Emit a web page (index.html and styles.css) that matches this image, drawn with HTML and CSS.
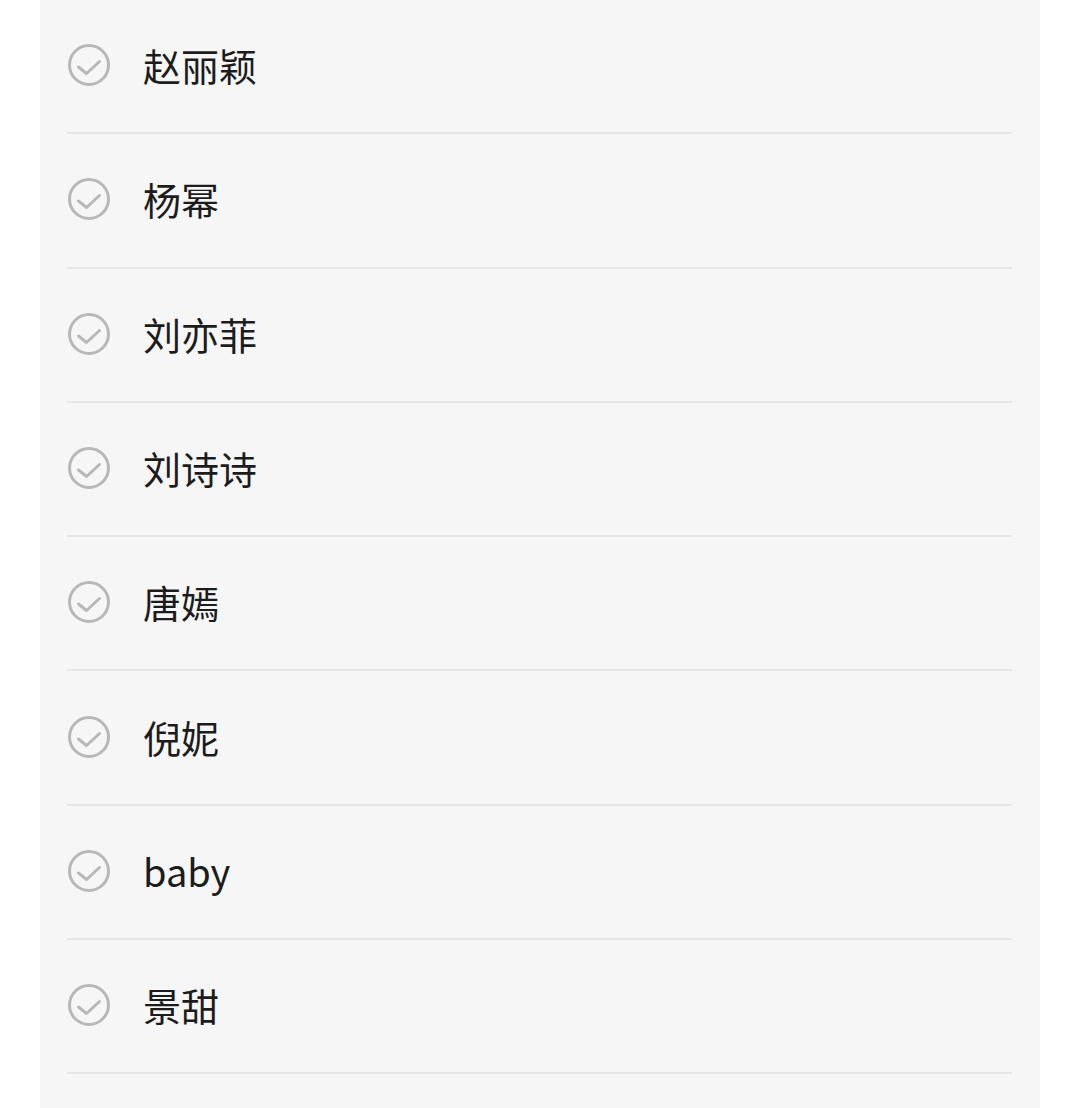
FILE: index.html
```
<!DOCTYPE html>
<html lang="zh">
<head>
    <meta charset="UTF-8">
    <meta name="viewport" content="width=device-width, initial-scale=1.0">
    <title>名单</title>
    <link rel="stylesheet" href="styles.css">
</head>
<body>
    <div class="panel">
        <ul class="list">
            <li class="item"><svg class="check" viewBox="0 0 44 44"><circle cx="22" cy="22" r="19.5" /><path d="M11.5 24 L19.5 30.5 L32.5 18.5" /></svg><span class="name">赵丽颖</span></li>
            <li class="item"><svg class="check" viewBox="0 0 44 44"><circle cx="22" cy="22" r="19.5" /><path d="M11.5 24 L19.5 30.5 L32.5 18.5" /></svg><span class="name">杨幂</span></li>
            <li class="item"><svg class="check" viewBox="0 0 44 44"><circle cx="22" cy="22" r="19.5" /><path d="M11.5 24 L19.5 30.5 L32.5 18.5" /></svg><span class="name">刘亦菲</span></li>
            <li class="item"><svg class="check" viewBox="0 0 44 44"><circle cx="22" cy="22" r="19.5" /><path d="M11.5 24 L19.5 30.5 L32.5 18.5" /></svg><span class="name">刘诗诗</span></li>
            <li class="item"><svg class="check" viewBox="0 0 44 44"><circle cx="22" cy="22" r="19.5" /><path d="M11.5 24 L19.5 30.5 L32.5 18.5" /></svg><span class="name">唐嫣</span></li>
            <li class="item"><svg class="check" viewBox="0 0 44 44"><circle cx="22" cy="22" r="19.5" /><path d="M11.5 24 L19.5 30.5 L32.5 18.5" /></svg><span class="name">倪妮</span></li>
            <li class="item"><svg class="check" viewBox="0 0 44 44"><circle cx="22" cy="22" r="19.5" /><path d="M11.5 24 L19.5 30.5 L32.5 18.5" /></svg><span class="name">baby</span></li>
            <li class="item"><svg class="check" viewBox="0 0 44 44"><circle cx="22" cy="22" r="19.5" /><path d="M11.5 24 L19.5 30.5 L32.5 18.5" /></svg><span class="name">景甜</span></li>
        </ul>
    </div>
</body>
</html>
```

FILE: styles.css
```
body {
    margin: 0;
    background-color: #fff;
    font-family: "Noto Sans CJK SC", "Noto Sans", sans-serif;
    color: #1c1c1c;
}

.panel {
    margin-left: 40px;
    width: 1000px;
    min-height: 1108px;
    background-color: #f6f6f6;
    padding: 0 28px 0 27px;
    box-sizing: border-box;
}

.list {
    list-style: none;
    margin: 0;
    padding: 0;
}

.item {
    display: flex;
    align-items: center;
    height: 134.3px;
    box-sizing: border-box;
    border-bottom: 2px solid #e6e6e6;
    padding-bottom: 2px;
}

.check {
    width: 44px;
    height: 44px;
    margin-right: 32px;
    fill: none;
    stroke: #b8b8b8;
    stroke-width: 3;
    stroke-linecap: round;
    stroke-linejoin: round;
}

.name {
    font-size: 38px;
    line-height: 1;
}
```
